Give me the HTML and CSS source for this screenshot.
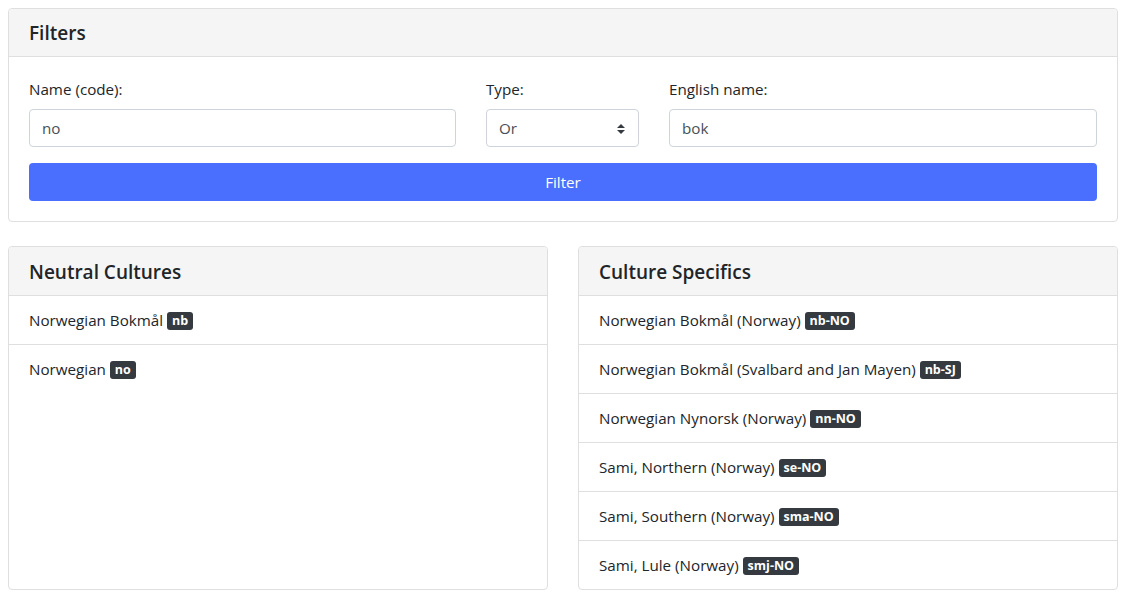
FILE: index.html
```html
<!DOCTYPE html>
<html>
<head>
<meta charset="utf-8">
<link rel="stylesheet" href="styles.css">
</head>
<body>
<div class="page">
  <section class="card">
    <div class="card-header">Filters</div>
    <div class="card-body">
      <div class="form-row">
        <div class="field field-name">
          <label class="label">Name (code):</label>
          <div class="input">no</div>
        </div>
        <div class="field field-type">
          <label class="label">Type:</label>
          <div class="input select">Or
            <svg class="caret" width="10" height="12" viewBox="0 0 10 12"><path d="M1 5 L5 1 L9 5 Z M1 7 L5 11 L9 7 Z" fill="#343a40"/></svg>
          </div>
        </div>
        <div class="field field-eng">
          <label class="label">English name:</label>
          <div class="input">bok</div>
        </div>
      </div>
      <button class="btn">Filter</button>
    </div>
  </section>

  <div class="columns">
    <section class="card list-card">
      <div class="card-header">Neutral Cultures</div>
      <ul class="list">
        <li class="item">Norwegian Bokmål <span class="badge">nb</span></li>
        <li class="item">Norwegian <span class="badge">no</span></li>
      </ul>
    </section>
    <section class="card list-card">
      <div class="card-header">Culture Specifics</div>
      <ul class="list">
        <li class="item">Norwegian Bokmål (Norway) <span class="badge">nb-NO</span></li>
        <li class="item">Norwegian Bokmål (Svalbard and Jan Mayen) <span class="badge">nb-SJ</span></li>
        <li class="item">Norwegian Nynorsk (Norway) <span class="badge">nn-NO</span></li>
        <li class="item">Sami, Northern (Norway) <span class="badge">se-NO</span></li>
        <li class="item">Sami, Southern (Norway) <span class="badge">sma-NO</span></li>
        <li class="item">Sami, Lule (Norway) <span class="badge">smj-NO</span></li>
      </ul>
    </section>
  </div>
</div>
</body>
</html>
```

FILE: styles.css
```css
* { box-sizing: border-box; }
body {
  margin: 0;
  font-family: "Open Sans", "Noto Sans", sans-serif;
  font-size: 15.2px;
  line-height: 24px;
  color: #212529;
  background: #fff;
}
.page {
  padding: 8px;
}
.card {
  border: 1px solid #dfdfdf;
  border-radius: 4px;
  background: #fff;
  overflow: hidden;
}
.card-header {
  background: #f5f5f5;
  border-bottom: 1px solid #dfdfdf;
  padding: 13px 20px 11px;
  font-size: 19px;
  font-weight: 600;
  line-height: 23px;
}
.list-card .card-header {
  line-height: 24px;
}
.card-body {
  padding: 20px;
}
.form-row {
  display: grid;
  grid-template-columns: 427px 153px 1fr;
  column-gap: 30px;
}
.label {
  display: block;
  margin-bottom: 8px;
}
.input {
  height: 38px;
  border: 1px solid #ced4da;
  border-radius: 4px;
  padding: 6px 12px;
  color: #495057;
  position: relative;
}
.select .caret {
  position: absolute;
  right: 12px;
  top: 13px;
}
.btn {
  display: block;
  width: 100%;
  height: 38px;
  margin-top: 16px;
  background: #4a6fff;
  color: #fff;
  border: none;
  border-radius: 4px;
  font: inherit;
}
.columns {
  display: grid;
  grid-template-columns: 1fr 1fr;
  column-gap: 30px;
  margin-top: 24px;
  align-items: stretch;
}
.list {
  list-style: none;
  margin: 0;
  padding: 0;
}
.item {
  padding: 12px 20px;
  border-bottom: 1px solid #dfdfdf;
}
.item:last-child { border-bottom: none; }
.badge {
  display: inline-block;
  background: #343a40;
  color: #fff;
  font-size: 12.5px;
  font-weight: 700;
  line-height: 16px;
  padding: 1px 5px 1px;
  border-radius: 3px;
  vertical-align: 1px;
}
```
